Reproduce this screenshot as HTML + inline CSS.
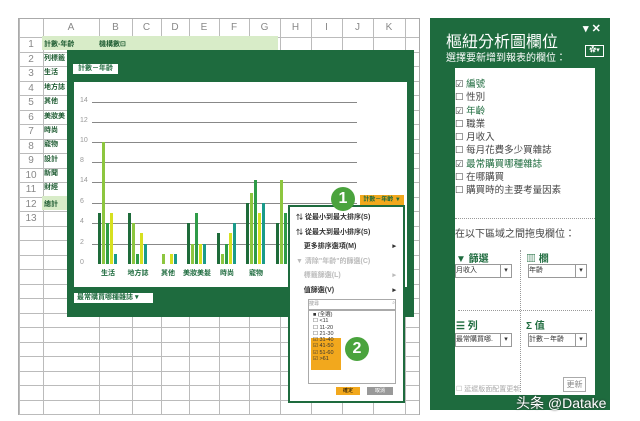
<!DOCTYPE html><html><head><meta charset="utf-8"><style>
body{margin:0;width:640px;height:421px;background:#fff;position:relative;overflow:hidden;font-family:"Liberation Sans","Noto Sans CJK TC",sans-serif}
.a{position:absolute}
.t{font-size:7px;color:#1c5a30;font-weight:bold;white-space:nowrap}
.h{font-size:10px;color:#888;text-align:center}
</style></head><body>
<div id="g" class="a" style="left:18px;top:18px;width:400px;height:395px;border:1px solid #aaa;background:#fff"></div>
<div class="a" style="left:42px;top:36px;width:236px;height:14px;background:#d8ecc8"></div>
<div class="a t" style="left:44px;top:39px">計數-年齡</div><div class="a t" style="left:99px;top:39px">機構數⊡</div>
<div class="a" style="left:42px;top:196px;width:25px;height:14px;background:#d8ecc8"></div>
<div class="a t" style="left:44px;top:53px">列標籤</div><div class="a t" style="left:44px;top:67px">生活</div><div class="a t" style="left:44px;top:82px">地方誌</div><div class="a t" style="left:44px;top:96px">其他</div><div class="a t" style="left:44px;top:111px">美妝美</div><div class="a t" style="left:44px;top:125px">時尚</div><div class="a t" style="left:44px;top:139px">寵物</div><div class="a t" style="left:44px;top:154px">設計</div><div class="a t" style="left:44px;top:168px">新聞</div><div class="a t" style="left:44px;top:182px">財經</div><div class="a t" style="left:44px;top:199px">總計</div>
<div class="a" style="left:67px;top:50px;width:347px;height:267px;background:#1e6b3e"></div>
<div class="a" style="left:73px;top:64px;width:45px;height:10px;background:#fff;font-size:7px;color:#1e6b3e;font-weight:bold;line-height:10px;text-align:center">計數－年齡</div>
<div class="a" style="left:74px;top:82px;width:333px;height:205px;background:#fff"></div>
<div class="a" style="left:74px;top:293px;width:76px;height:10px;background:#fff;font-size:7px;color:#1e6b3e;font-weight:bold;line-height:10px;padding-left:3px">最常購買哪種雜誌 ▾</div>
<div id="c"></div>
<div class="a" style="left:430px;top:18px;width:180px;height:392px;background:#1e6b3e"></div>
<div class="a" style="left:446px;top:28px;font-size:16px;color:#fff">樞紐分析圖欄位</div>
<div class="a" style="left:446px;top:49px;font-size:10px;color:#fff">選擇要新增到報表的欄位：</div>
<div class="a" style="left:583px;top:22px;font-size:11px;color:#fff;font-weight:bold">▾ ✕</div>
<div class="a" style="left:585px;top:45px;width:17px;height:10px;border:1px solid #fff;font-size:7px;color:#fff;text-align:center;line-height:10px">✿▾</div>
<div class="a" style="left:455px;top:68px;width:140px;height:327px;background:#fff"></div>
<div class="a" style="left:455px;top:78px;font-size:9.5px;line-height:13.3px;color:#444">☑ <span style="color:#1e6b3e">編號</span><br>☐ 性別<br>☑ <span style="color:#1e6b3e">年齡</span><br>☐ 職業<br>☐ 月收入<br>☐ 每月花費多少買雜誌<br>☑ <span style="color:#1e6b3e">最常購買哪種雜誌</span><br>☐ 在哪購買<br>☐ 購買時的主要考量因素</div>
<div class="a" style="left:455px;top:218px;width:140px;border-top:1px dotted #999"></div>
<div class="a" style="left:455px;top:225px;font-size:10px;color:#444">在以下區域之間拖曳欄位：</div>
<div class="a" style="left:520px;top:250px;height:142px;border-left:1px dotted #999"></div>
<div class="a" style="left:458px;top:310px;width:134px;border-top:1px dotted #999"></div>
<div class="a" style="left:456px;top:250px;font-size:10px;color:#1e6b3e;font-weight:bold">▼ 篩選</div>
<div class="a" style="left:526px;top:250px;font-size:10px;color:#1e6b3e;font-weight:bold">▥ 欄</div>
<div class="a" style="left:456px;top:317px;font-size:10px;color:#1e6b3e;font-weight:bold">☰ 列</div>
<div class="a" style="left:526px;top:317px;font-size:10px;color:#1e6b3e;font-weight:bold">Σ 值</div>
<div class="a" style="left:455px;top:264px;width:55px;height:12px;border:1px solid #999;font-size:7px;line-height:12px;color:#333">月收入<span style="float:right;border-left:1px solid #999;width:10px;text-align:center">▾</span></div>
<div class="a" style="left:528px;top:264px;width:57px;height:12px;border:1px solid #999;font-size:7px;line-height:12px;color:#333">年齡<span style="float:right;border-left:1px solid #999;width:10px;text-align:center">▾</span></div>
<div class="a" style="left:455px;top:333px;width:55px;height:12px;border:1px solid #999;font-size:7px;line-height:12px;color:#333">最常購買哪.<span style="float:right;border-left:1px solid #999;width:10px;text-align:center">▾</span></div>
<div class="a" style="left:528px;top:333px;width:57px;height:12px;border:1px solid #999;font-size:7px;line-height:12px;color:#333">計數－年齡<span style="float:right;border-left:1px solid #999;width:10px;text-align:center">▾</span></div>
<div class="a" style="left:456px;top:384px;font-size:7px;color:#aaa">☐ 延遲版面配置更新</div>
<div class="a" style="left:563px;top:377px;width:21px;height:13px;border:1px solid #aaa;font-size:8px;color:#888;text-align:center;line-height:13px">更新</div>
<div class="a" style="left:516px;top:393px;font-size:14px;color:#fff;text-shadow:0 0 2px #333">头条 @Datake</div>
<div class="a" style="left:360px;top:195px;width:44px;height:11px;background:#f2a81d;font-size:6px;color:#1e6b3e;font-weight:bold;line-height:11px;text-align:center">計數－年齡 ▼</div>
<div class="a" style="left:288px;top:205px;width:113px;height:194px;background:#fff;border:2px solid #1e6b3e"></div>
<div class="a" style="left:296px;top:211px;font-size:7px;line-height:14.5px;color:#333;font-weight:bold;width:100px">⇅ 從最小到最大排序(S)<br>⇅ 從最大到最小排序(S)<br>&nbsp;&nbsp;&nbsp;&nbsp;更多排序選項(M)<span style="float:right">▸</span><br><span style="color:#bbb">▼ 清除"年齡"的篩選(C)<br>&nbsp;&nbsp;&nbsp;&nbsp;標籤篩選(L)<span style="float:right">▸</span></span><br>&nbsp;&nbsp;&nbsp;&nbsp;值篩選(V)<span style="float:right">▸</span></div>
<div class="a" style="left:308px;top:299px;width:86px;height:9px;border:1px solid #aaa;font-size:5px;color:#999">搜尋<span style="float:right">⌕</span></div>
<div class="a" style="left:308px;top:310px;width:86px;height:72px;border:1px solid #aaa"></div>
<div class="a" style="left:311px;top:338px;width:30px;height:32px;background:#f2a81d"></div>
<div class="a" style="left:313px;top:312px;font-size:5.5px;line-height:6.3px;color:#333">■ (全選)<br>☐ &lt;11<br>☐ 11-20<br>☐ 21-30<br>☑ 31-40<br>☑ 41-50<br>☑ 51-60<br>☑ &gt;61</div>
<div class="a" style="left:336px;top:387px;width:24px;height:8px;background:#f2a81d;font-size:5px;text-align:center;line-height:8px">確定</div>
<div class="a" style="left:367px;top:387px;width:26px;height:8px;background:#999;font-size:5px;color:#fff;text-align:center;line-height:8px">取消</div>
<div class="a" style="left:331px;top:187px;width:24px;height:24px;border-radius:50%;background:#4aa33d;color:#fff;font-weight:bold;font-size:16px;text-align:center;line-height:24px">1</div>
<div class="a" style="left:345px;top:337px;width:24px;height:24px;border-radius:50%;background:#4aa33d;color:#fff;font-weight:bold;font-size:16px;text-align:center;line-height:24px">2</div>
<script>
var g=document.getElementById('g'),h='';
var cx=[0,24,80,113,142,170,200,230,261,292,323,354,386];
cx.forEach(function(x){h+='<div class="a" style="left:'+x+'px;top:0;width:1px;height:395px;background:#bbb"></div>'});
var L="ABCDEFGHIJK";for(var i=0;i<11;i++)h+='<div class="a h" style="left:'+cx[i+1]+'px;top:3px;width:'+(cx[i+2]-cx[i+1])+'px">'+L[i]+'</div>';
for(var r=0;r<27;r++){var y=18+r*14.5;h+='<div class="a" style="left:0;top:'+y+'px;width:400px;height:1px;background:#bbb"></div>';if(r<13)h+='<div class="a h" style="left:0;top:'+(y+2)+'px;width:24px">'+(r+1)+'</div>';}
g.innerHTML=h;
var c='',lab=[[14,102],[12,122],[10,142],[8,162],[14,182],[6,203],[4,223],[2,244],[0,264]];
lab.forEach(function(l){c+='<div class="a" style="left:80px;top:'+(l[1]-5)+'px;font-size:7px;color:#999">'+l[0]+'</div>';if(l[0])c+='<div class="a" style="left:92px;top:'+l[1]+'px;width:265px;height:1px;background:#888"></div>'});
var col=['#1e6b3a','#8dc63f','#2e9b48','#d6e020','#1a9a8a'];
var d=[[98,[5,12,4,5,1],'生活'],[128,[5,4,1,3,2],'地方誌'],[158,[0,1,0,1,1],'其他'],[187,[4,2,5,2,2],'美妝美髮'],[217,[3,1,2,3,4],'時尚'],[246,[6,7,8.2,5,6],'寵物'],[276,[4,8.2,5,0,0],'']];
d.forEach(function(k){k[1].forEach(function(v,j){if(v)c+='<div class="a" style="left:'+(k[0]+j*4)+'px;top:'+(264-v*10.2)+'px;width:3px;height:'+(v*10.2)+'px;background:'+col[j]+'"></div>'});if(k[2])c+='<div class="a" style="left:'+(k[0]-6)+'px;top:268px;width:32px;text-align:center;font-size:7px;color:#1e6b3e;font-weight:bold">'+k[2]+'</div>'});
document.getElementById('c').innerHTML=c;
</script>
</body></html>
